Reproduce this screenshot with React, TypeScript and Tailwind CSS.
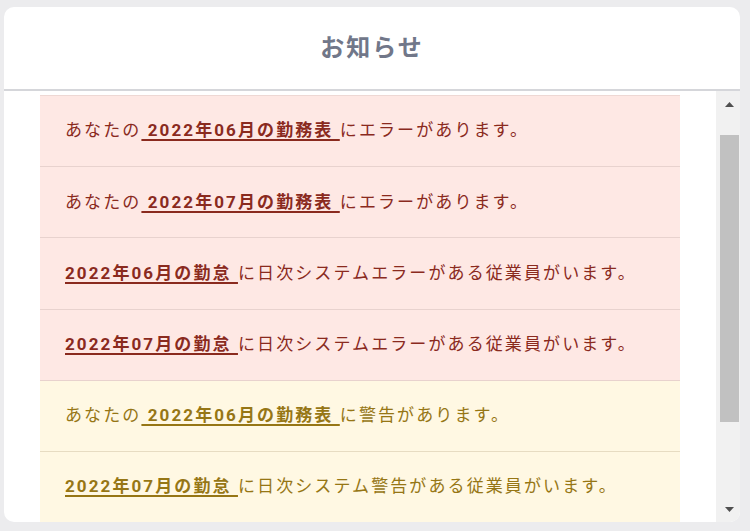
import React from 'react';

type Notice = {
  level: 'error' | 'warning';
  before?: string;
  link: string;
  after: string;
};

const notices: Notice[] = [
  { level: 'error', before: 'あなたの', link: ' 2022年06月の勤務表 ', after: 'にエラーがあります。' },
  { level: 'error', before: 'あなたの', link: ' 2022年07月の勤務表 ', after: 'にエラーがあります。' },
  { level: 'error', link: '2022年06月の勤怠 ', after: 'に日次システムエラーがある従業員がいます。' },
  { level: 'error', link: '2022年07月の勤怠 ', after: 'に日次システムエラーがある従業員がいます。' },
  { level: 'warning', before: 'あなたの', link: ' 2022年06月の勤務表 ', after: 'に警告があります。' },
  { level: 'warning', link: '2022年07月の勤怠 ', after: 'に日次システム警告がある従業員がいます。' },
];

function NoticeRow({ notice }: { notice: Notice }) {
  const isError = notice.level === 'error';
  return (
    <li
      className={`h-[71.2px] flex items-center pl-[25px] border-b ${
        isError
          ? 'bg-[#fee8e4] text-[#8a2a1e] border-[#e8d2ce]'
          : 'bg-[#fff8e3] text-[#967615] border-[#e7dcc2]'
      }`}
    >
      <p className="text-[17px] tracking-[2.1px] whitespace-pre">
        {notice.before}
        <a href="#" className="font-bold underline underline-offset-[3px] decoration-[1.5px]">
          {notice.link}
        </a>
        {notice.after}
      </p>
    </li>
  );
}

export default function App() {
  return (
    <div
      className="w-[750px] h-[531px] bg-[#ececee] pl-1 pt-[7px]"
      style={{ fontFamily: "Roboto, 'Noto Sans CJK JP', sans-serif" }}
    >
      <div className="w-[736px] h-[515px] bg-white rounded-[10px] flex flex-col overflow-hidden">
        <header className="h-[84px] shrink-0 border-b-2 border-[#d5d6da] flex items-center justify-center">
          <h1 className="text-[24px] font-bold tracking-[2px] text-[#717789]">お知らせ</h1>
        </header>
        <div className="flex-1 flex min-h-0">
          <div className="flex-1 overflow-hidden px-9 pt-[4px]">
            <ul className="border-t border-[#eed8d4]">
              {notices.map((n, i) => (
                <NoticeRow key={i} notice={n} />
              ))}
            </ul>
          </div>
          <div className="w-[24px] shrink-0 bg-[#f1f1f1] flex flex-col items-center">
            <div className="h-[26px] w-full flex items-center justify-center pl-[3px]">
              <svg width="9" height="5" viewBox="0 0 9 5">
                <path d="M0 5 L4.5 0 L9 5 Z" fill="#505050" />
              </svg>
            </div>
            <div className="w-[19px] ml-[3px] h-[287px] mt-[18px] bg-[#c1c1c1]" />
            <div className="flex-1" />
            <div className="h-[26px] w-full flex items-center justify-center pl-[3px]">
              <svg width="9" height="5" viewBox="0 0 9 5">
                <path d="M0 0 L9 0 L4.5 5 Z" fill="#505050" />
              </svg>
            </div>
          </div>
        </div>
      </div>
    </div>
  );
}
